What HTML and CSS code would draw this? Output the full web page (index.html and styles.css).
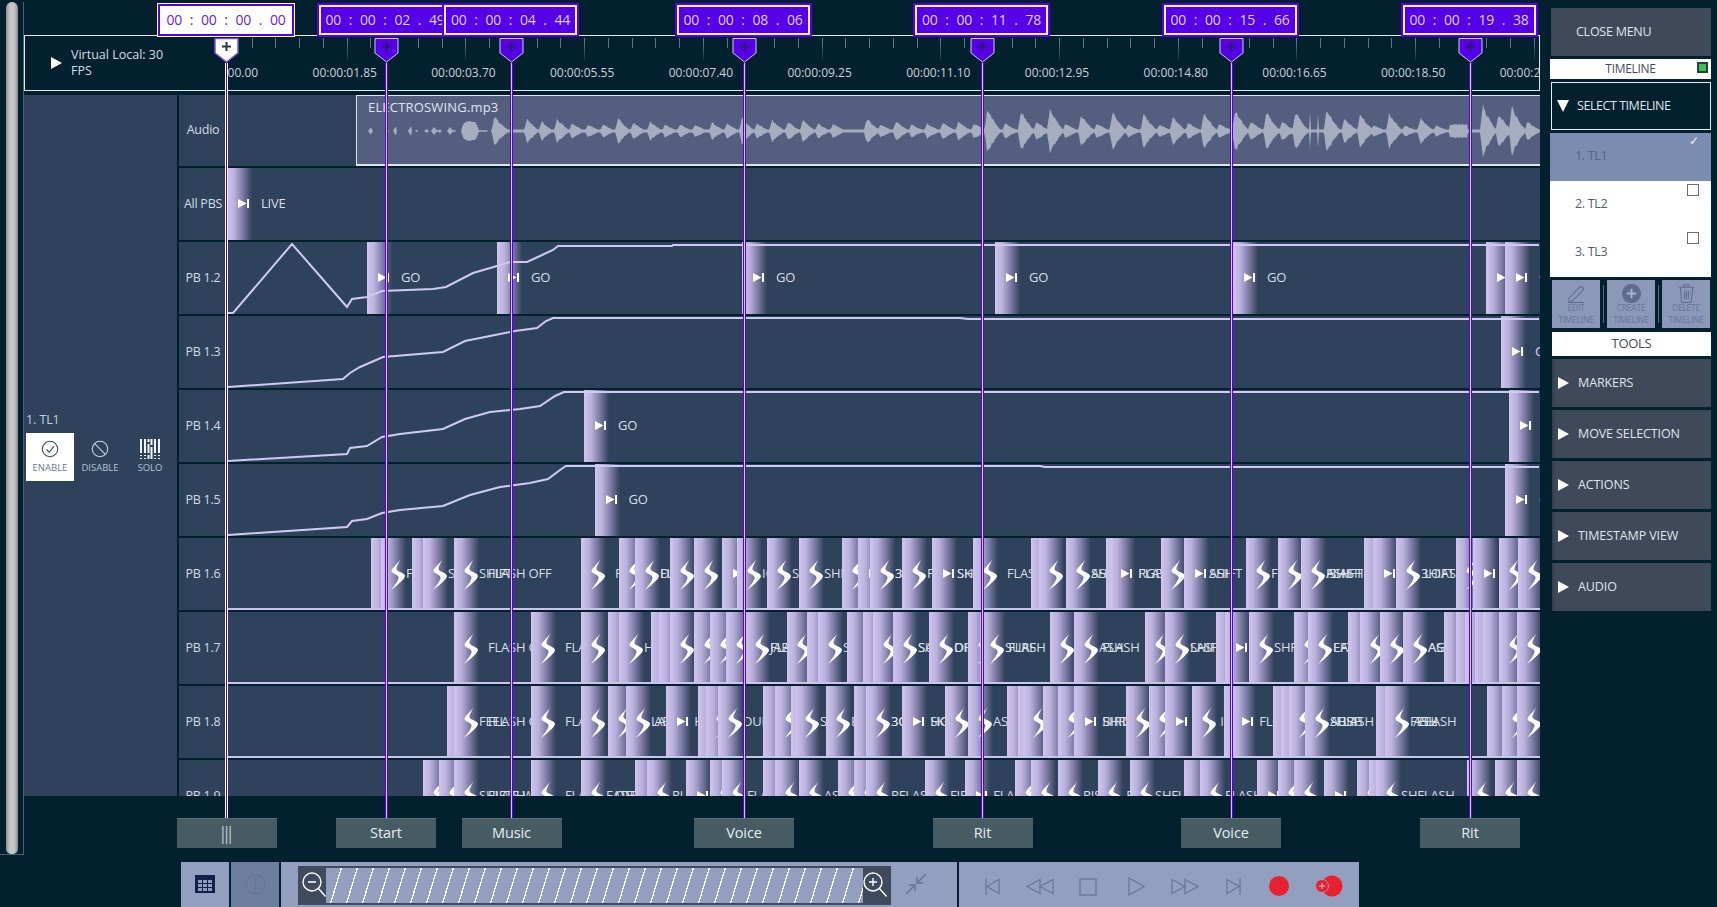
FILE: index.html
```html
<!DOCTYPE html>
<html lang="en">
<head>
<meta charset="utf-8">
<title>Timeline</title>
<link rel="stylesheet" href="styles.css">
</head>
<body>
<div class="app" id="app">
  <div class="rail"><div class="thumb"></div></div>
  <main class="main">
    <div class="timebar"></div>
    <div class="ruler">
      <div class="ruler-head">
        <span class="tri tri-right"></span>
        <span class="fps">Virtual Local: 30<br>FPS</span>
      </div>
      <div class="scale" id="scale"></div>
    </div>
    <div class="body">
      <section class="panel">
        <div class="panel-title">1. TL1</div>
        <div class="modes">
          <div class="mode mode-on">
            <svg viewBox="0 0 20 20" class="mode-ic"><circle cx="10" cy="10" r="8.6"/><path d="M6 10.5l3 3 5.5-6.5"/></svg>
            <span>ENABLE</span>
          </div>
          <div class="mode">
            <svg viewBox="0 0 20 20" class="mode-ic"><circle cx="10" cy="10" r="8.6"/><path d="M4 4l12 12"/></svg>
            <span>DISABLE</span>
          </div>
          <div class="mode">
            <svg viewBox="0 0 20 20" class="mode-ic solo-ic"><path d="M1 0v14M1 16v1M1 19v1M5 0v14M5 16v1M5 19v1M8.5 0v3M8.5 5v9M8.5 16v4M11.5 0v6M11.5 8v12M15 0v14M15 16v1M15 19v1M19 0v14M19 16v1M19 19v1"/></svg>
            <span>SOLO</span>
          </div>
        </div>
      </section>
      <section class="rows" id="rows"></section>
    </div>
    <div class="body-gap"></div>
    <div class="toolbar">
      <div class="tb-btn">
        <svg viewBox="0 0 20 18" class="tb-table"><rect width="20" height="18" fill="#14204a"/><path d="M3 5h4v3H3zM8 5h4v3H8zM13 5h4v3h-4zM3 9h4v3H3zM8 9h4v3H8zM13 9h4v3h-4zM3 13h4v3H3zM8 13h4v3H8zM13 13h4v3h-4z" fill="#8f9abb"/></svg>
      </div>
      <div class="tb-btn tb-btn-dim">
        <svg viewBox="0 0 22 22" class="tb-info"><circle cx="11" cy="11" r="10"/><circle cx="11" cy="6" r="1.2"/><path d="M11 9.5v8"/></svg>
      </div>
      <div class="zoomer">
        <div class="zoom-bar">
          <svg viewBox="0 0 28 36" class="lens"><circle cx="14" cy="14" r="9"/><path d="M20.5 20.5l7 8M10 14h8"/></svg>
          <div class="hatch"></div>
          <svg viewBox="0 0 28 36" class="lens"><circle cx="10" cy="14" r="9"/><path d="M16.5 20.5l7 8M6 14h8M10 10v8"/></svg>
        </div>
        <svg viewBox="0 0 20 20" class="collapse"><path d="M0 20l8-8M3 11h6v6M20 0l-8 8M17 9h-6V3"/></svg>
      </div>
      <div class="transport">
        <svg viewBox="0 0 16 18" class="tp tp-a"><path d="M1 0v18M15 1.500v15L2 9z"/></svg>
        <svg viewBox="0 0 30 18" class="tp tp-b"><path d="M15 1.500v15L1 9zM29 1.500v15L15 9z"/></svg>
        <svg viewBox="0 0 18 18" class="tp tp-c"><rect x="1" y="1" width="16" height="16"/></svg>
        <svg viewBox="0 0 18 20" class="tp tp-d"><path d="M1 1v18l16-9z"/></svg>
        <svg viewBox="0 0 30 18" class="tp tp-e"><path d="M1 1.500v15L15 9zM15 1.500v15L29 9z"/></svg>
        <svg viewBox="0 0 16 18" class="tp tp-f"><path d="M15 0v18M1 1.500v15L14 9z"/></svg>
        <span class="rec"></span>
        <svg viewBox="0 0 28 22" class="rec-add"><circle cx="17" cy="11" r="10.500" fill="#e8202f"/><circle cx="7" cy="11" r="6.500" fill="#e8202f" stroke="#939fbe"/><path d="M4 11h6M7 8v6" stroke="#d9c6d2" fill="none"/></svg>
      </div>
    </div>
  </main>
  <aside class="menu">
    <div class="m-item m-close">CLOSE MENU</div>
    <div class="m-head">TIMELINE<span class="led"></span></div>
    <div class="m-item m-select"><span class="tri tri-down"></span>SELECT TIMELINE</div>
    <ul class="tl-list">
      <li class="tl tl-on"><span class="tick">&#10003;</span>1. TL1</li>
      <li class="tl"><span class="box"></span>2. TL2</li>
      <li class="tl"><span class="box"></span>3. TL3</li>
    </ul>
    <div class="tl-actions">
      <div class="act">
        <svg viewBox="0 0 20 20"><path d="M2 15L13 3.500q2-1.500 3.500 0t0 3.500L5.500 18H2zM1 19.500h17"/></svg>
        <span>EDIT<br>TIMELINE</span>
      </div>
      <div class="act">
        <svg viewBox="0 0 20 20"><circle cx="10" cy="10" r="9.500" class="act-fill"/><path d="M10 5v10M5 10h10" class="act-plus"/></svg>
        <span>CREATE<br>TIMELINE</span>
      </div>
      <div class="act">
        <svg viewBox="0 0 20 20"><path d="M2 3.500h16M7 3.500V1h6v2.500M3.500 3.500L5 19.500h10l1.500-16M8 7v9M10 7v9M12 7v9"/></svg>
        <span>DELETE<br>TIMELINE</span>
      </div>
    </div>
    <div class="m-tools">TOOLS</div>
    <div class="m-item m-acc"><span class="tri tri-right"></span>MARKERS</div>
    <div class="m-item m-acc"><span class="tri tri-right"></span>MOVE SELECTION</div>
    <div class="m-item m-acc"><span class="tri tri-right"></span>ACTIONS</div>
    <div class="m-item m-acc"><span class="tri tri-right"></span>TIMESTAMP VIEW</div>
    <div class="m-item m-acc"><span class="tri tri-right"></span>AUDIO</div>
  </aside>
</div>
<script src="app.js"></script>
</body>
</html>
```
FILE: styles.css
```css
* { box-sizing: border-box; }
html, body { margin: 0; padding: 0; }
body {
  background: #03202f;
  font-family: "Open Sans", "Noto Sans", sans-serif;
  color: #d8dfe8;
  overflow: hidden;
}
.app {
  position: relative;
  display: flex;
  width: 1717px;
  height: 907px;
  overflow: hidden;
  background: #03202f;
}

/* left rail */
.rail {
  width: 24px;
  height: 853px;
  margin-top: 2px;
  padding-left: 6px;
  flex: none;
  border-right: 1px solid #4b6272;
  border-bottom: 1px solid #4b6272;
}
.thumb {
  width: 12px;
  height: 100%;
  border-radius: 6px 6px 5px 5px;
  background: linear-gradient(90deg, #8f8f8f, #c9c9c9 35%, #c4c4c4 70%, #8a8a8a);
}

/* main column */
.main {
  width: 1516px;
  flex: none;
  display: flex;
  flex-direction: column;
}
.timebar { height: 35px; flex: none; }
.ruler {
  height: 56px;
  flex: none;
  display: flex;
  border: 1px solid #dfe9ee;
}
.ruler-head {
  width: 202px;
  flex: none;
  display: flex;
  align-items: center;
  gap: 9px;
  padding-left: 26px;
}
.fps { font-size: 12.5px; line-height: 16px; letter-spacing: 0; color: #d5dde4; }
.scale { position: relative; flex: 1; overflow: hidden; }
.tick-mark { position: absolute; top: 2px; width: 1px; height: 10px; background: #5f7784; }
.tick-major { height: 22px; background: linear-gradient(#6f8590, rgba(111,133,144,.15)); }
.time-label {
  position: absolute;
  top: 28px;
  transform: translateX(-50%);
  font-size: 12px;
  line-height: 18px;
  letter-spacing: 0;
  color: #c6d2da;
  white-space: nowrap;
}

/* body */
.body {
  height: 701px;
  margin-top: 4px;
  flex: none;
  display: flex;
  overflow: hidden;
  background: #2f425c;
}
.panel { width: 153px; flex: none; padding: 316px 0 0 2px; }
.panel-title { font-size: 12.500px; line-height: 18px; letter-spacing: -0.1px; color: #c3cfdc; margin-bottom: 4px; }
.modes { display: flex; gap: 2px; }
.mode {
  width: 48px;
  height: 48px;
  flex: none;
  display: flex;
  flex-direction: column;
  align-items: center;
  padding-top: 7px;
  font-size: 9.500px;
  line-height: 14px;
  letter-spacing: 0;
  color: #b5c1d2;
}
.mode-on { background: #fff; color: #6a7a96; }
.mode-ic { width: 18px; height: 18px; margin-bottom: 3px; fill: none; stroke: #c8d3e0; stroke-width: 1.200; }
.mode-on .mode-ic { stroke: #3c4c68; }
.solo-ic { width: 20px; height: 20px; margin-top: -1px; margin-bottom: 2px; stroke: #f1f4f8; stroke-width: 2; }

.rows { flex: 1; display: flex; flex-direction: column; border-left: 2px solid #03202f; }
.row { height: 74px; flex: none; display: flex; border-bottom: 2px solid #03202f; }
.row-audio { height: 73px; }
.row-label {
  width: 48px;
  flex: none;
  display: flex;
  align-items: center;
  justify-content: center;
  padding-bottom: 2px;
  font-size: 12.500px;
  letter-spacing: -0.25px;
  color: #d2dbe6;
  white-space: nowrap;
}
.track { position: relative; flex: 1; overflow: hidden; }
.floor::after {
  content: "";
  position: absolute;
  left: 0;
  right: 0;
  bottom: 0;
  height: 2px;
  background: #cdc4ee;
  z-index: 3;
}
.audio-clip {
  position: absolute;
  left: 129px;
  top: 0;
  right: -4px;
  bottom: 0;
  background: #545f80;
  border: 1px solid #dfe5ee;
  border-width: 1px 0 2px 1px;
}
.audio-name {
  position: absolute;
  left: 11px;
  top: 1px;
  font-size: 13px;
  line-height: 20px;
  letter-spacing: 0.18px;
  color: #dfe5ee;
}
.wave { position: absolute; left: 0; top: 0; width: 1190px; height: 70px; fill: #a5adbe; }
.clip {
  position: absolute;
  top: 0;
  bottom: 0;
  overflow: hidden;
  background: #2f425c linear-gradient(90deg, #cfc5ee, #b9b0dc 30%, #72739a 68%, #2f425c) no-repeat 0 0 / 25px 100%;
}
.clip-label {
  position: absolute;
  top: 25px;
  font-size: 13px;
  line-height: 20px;
  letter-spacing: -0.2px;
  color: #d9dfe9;
  white-space: pre;
}
.lab-far { left: 34px; }
.lab-near { left: 25px; }
.ic-s { position: absolute; left: 10px; top: 21px; width: 14px; height: 31px; fill: #fff; }
.ic-p { position: absolute; left: 11px; top: 31px; width: 11px; height: 9px; fill: #fff; }
.env { position: absolute; left: 0; top: 0; width: 1312px; height: 72px; fill: none; stroke: #d0c9f2; stroke-width: 2; z-index: 2; overflow: visible; }

.body-gap { height: 66px; flex: none; }

/* markers */
.marker {
  position: absolute;
  top: 3px;
  height: 845px;
  width: 140px;
  transform: translateX(-50%);
  display: flex;
  flex-direction: column;
  align-items: center;
  z-index: 5;
}
.stamp {
  width: 137px;
  height: 34px;
  margin-right: 2px;
  flex: none;
  display: flex;
  align-items: center;
  justify-content: center;
  padding-bottom: 2px;
  border: 2px solid #5600e8;
  background: #5600e8;
  box-shadow: inset 0 0 0 2px #f4f0ff;
  color: #ddd2ff;
  font-size: 14px;
  letter-spacing: -0.25px;
  word-spacing: 4.400px;
  white-space: pre;
  overflow: hidden;
}
.stamp-on {
  width: 136px;
  height: 32px;
  margin: 1px 1px 1px 0;
  background: #fff;
  color: #6a22e0;
  box-shadow: 0 0 0 1px #fff;
}
.shield { width: 25px; height: 25px; margin-top: 1px; flex: none; }
.shield path:first-child { fill: #5600e8; stroke: #cfc8f2; stroke-width: 1; }
.shield path:last-child { fill: none; stroke: #2a1a6a; stroke-width: 2; }
.marker-on .shield path:first-child { fill: #fff; stroke: #7a4fe6; stroke-width: 1.500; }
.marker-on .shield path:last-child { stroke: #2c3850; }
.line {
  width: 3px;
  flex: 1;
  background: linear-gradient(90deg, #5600e8 33%, #d9d2f8 33%, #d9d2f8 66%, #5600e8 66%);
}
.marker-on .line { background: linear-gradient(90deg, #fff 33%, #5600e8 33%, #5600e8 66%, #fff 66%); }
.tag {
  width: 100px;
  height: 30px;
  flex: none;
  display: flex;
  align-items: center;
  justify-content: center;
  padding-bottom: 3px;
  background: #475b63;
  border-top: 1px solid #5b7076;
  font-size: 14.500px;
  letter-spacing: -0.1px;
  color: #e6edf0;
}
.marker-on .tag {
  padding: 0 6px 2px 0;
  font-size: 18px;
  font-weight: 300;
  letter-spacing: -6px;
}

/* toolbar */
.toolbar { height: 45px; flex: none; display: flex; margin-left: 157px; }
.tb-btn {
  width: 48px;
  margin-right: 2px;
  flex: none;
  display: flex;
  align-items: center;
  justify-content: center;
  background: #939fbe;
}
.tb-btn-dim { background: #6c7f9f; }
.tb-table { width: 20px; height: 18px; margin-top: -1px; }
.tb-info { width: 21px; height: 21px; fill: none; stroke: #5f7495; stroke-width: 1; }
.zoomer {
  width: 676px;
  flex: none;
  display: flex;
  padding: 4px 0 0 17px;
  background: #939fbe;
}
.zoom-bar {
  width: 593px;
  height: 39px;
  flex: none;
  display: flex;
  padding: 2px 0;
  background: #3f4a5c;
}
.lens { width: 28px; height: 36px; flex: none; fill: none; stroke: #fff; stroke-width: 1.400; }
.hatch {
  flex: 1;
  background: #939fbe repeating-linear-gradient(107deg, #939fbe 0, #939fbe 14px, #fff 14px, #fff 15.300px);
}
.collapse { width: 20px; height: 20px; margin: 8px 0 0 15px; fill: none; stroke: #66779a; stroke-width: 1.500; }
.transport {
  position: relative;
  width: 400px;
  margin-left: 2px;
  flex: none;
  display: flex;
  align-items: flex-start;
  background: #939fbe;
}
.tp { flex: none; fill: none; stroke: #66779a; stroke-width: 1.300; margin-top: 16px; }
.tp-a { width: 15px; height: 17px; margin-left: 26px; }
.tp-b { width: 28px; height: 17px; margin-left: 26px; }
.tp-c { width: 18px; height: 18px; margin-left: 25px; }
.tp-d { width: 17px; height: 19px; margin-left: 31px; margin-top: 15px; }
.tp-e { width: 28px; height: 17px; margin-left: 26px; }
.tp-f { width: 15px; height: 17px; margin-left: 27px; }
.rec { width: 20px; height: 20px; margin: 14px 0 0 28px; flex: none; border-radius: 50%; background: #e8202f; }
.rec-add { width: 28px; height: 22px; margin: 13px 0 0 26px; flex: none; }

/* right menu */
.menu {
  width: 161px;
  margin-left: 10px;
  padding-top: 8px;
  flex: none;
  display: flex;
  flex-direction: column;
  gap: 3px;
}
.m-item {
  height: 48px;
  flex: none;
  display: flex;
  align-items: center;
  padding: 0 0 2px 26px;
  font-size: 12.500px;
  letter-spacing: -0.25px;
  color: #dfe6ec;
  background: #3f4959;
}
.m-close { margin-left: 1px; padding-left: 25px; }
.m-head {
  position: relative;
  height: 20px;
  flex: none;
  display: flex;
  align-items: center;
  justify-content: center;
  padding-bottom: 2px;
  font-size: 12px;
  letter-spacing: -0.3px;
  color: #3f4c5c;
  background: #fff;
}
.led {
  position: absolute;
  right: 3px;
  top: 3px;
  width: 11px;
  height: 11px;
  background: #3ec24a;
  border: 2px solid #25404a;
}
.m-select {
  margin-left: 1px;
  padding-left: 25px;
  letter-spacing: -0.45px;
  background: #03202f;
  border: 1px solid #e6edf2;
  position: relative;
}
.m-select .tri { position: absolute; left: 5px; top: 17px; }
.m-acc { position: relative; margin-left: 2px; letter-spacing: -0.1px; background: #3f4959; box-shadow: inset 3px 0 3px -2px #2a3a48; padding-left: 26px; }
.m-acc .tri { position: absolute; left: 6px; top: 18px; }
.tri { display: block; flex: none; width: 0; height: 0; border-style: solid; border-color: transparent; }
.tri-right { border-width: 6px 0 6px 11px; border-left-color: #fff; }
.tri-down { border-width: 12px 6px 0 6px; border-top-color: #fff; }
.tl-list { margin: 0; padding: 0; list-style: none; flex: none; }
.tl {
  position: relative;
  height: 48px;
  padding: 14px 0 0 25px;
  font-size: 12.500px;
  line-height: 18px;
  letter-spacing: -0.3px;
  color: #55606e;
  background: #fff;
}
.tl-on { background: #7a8cb0; color: #536388; }
.box { position: absolute; right: 12px; top: 3px; width: 12px; height: 12px; border: 1px solid #666f7a; }
.tick { position: absolute; right: 12px; top: 0; font-size: 12px; line-height: 16px; color: #eef2f8; }
.tl-actions { height: 48px; margin: 0 1px 1px 2px; flex: none; display: flex; gap: 7px; }
.act {
  position: relative;
  width: 48px;
  flex: none;
  display: flex;
  flex-direction: column;
  align-items: center;
  padding-top: 4px;
  font-size: 8.500px;
  line-height: 12px;
  letter-spacing: -0.25px;
  text-align: center;
  color: #667799;
  background: #8b98b8;
}
.act + .act::before {
  content: "";
  position: absolute;
  left: -4px;
  top: 5px;
  bottom: 5px;
  width: 1px;
  background: #5a6b80;
}
.act svg { width: 19px; height: 19px; fill: none; stroke: #5d6d90; stroke-width: 1.100; }
.act span { margin-top: -1px; }
.act svg .act-fill { fill: #5d6d90; }
.act svg .act-plus { stroke: #a9b4cc; stroke-width: 2; }
.m-tools {
  height: 24px;
  margin-left: 2px;
  flex: none;
  display: flex;
  align-items: center;
  justify-content: center;
  padding-bottom: 2px;
  font-size: 13px;
  letter-spacing: -0.3px;
  color: #3f4c5c;
  background: #fff;
}
```
FILE: app.js
```js
(function () {
  var SVG = 'http://www.w3.org/2000/svg';
  var ORIGIN = 227;
  var S_PATH = 'M9.500 0C7.500 4 .5 9 .5 12 .5 14.500 6.500 15 7.500 18 8 21 3 27 0 31 5 27.500 14 20 14 17 14 14 6.500 13 5.500 10.500 5 8 8 3.500 9.500 0Z';
  var P_PATH = 'M0 0L8.500 4.500 0 9ZM9 0H11V9H9Z';

  var markers = [
    [226.5, '00 : 00 : 00 . 00', '|||', true],
    [386, '00 : 00 : 02 . 49', 'Start'],
    [511.5, '00 : 00 : 04 . 44', 'Music'],
    [744, '00 : 00 : 08 . 06', 'Voice'],
    [982.5, '00 : 00 : 11 . 78', 'Rit'],
    [1231, '00 : 00 : 15 . 66', 'Voice'],
    [1470, '00 : 00 : 19 . 38', 'Rit']
  ];

  /* token: x + icon (s, p, x) + labels; "^" puts a label at the near offset */
  var rows = [
    { name: 'All PBS', clips: ['227p|LIVE'] },
    { name: 'PB 1.2', clips: ['367p|GO', '497p|GO', '742p|GO', '995p|GO', '1233p|GO', '1486p', '1505p|OFF'],
      env: '228,313 233,313 292,244 347,307 352,299 367,297 377,293 382,291 433,289 446,287 473,273 497,266 510,262 527,262 540,256 553,250 558,246 672,246 673,245 1539,245' },
    { name: 'PB 1.3', clips: ['1501p|GO'],
      env: '228,387 343,379 350,373 360,367 383,357 443,352 465,341 490,336 515,331 537,328 546,321 553,318 960,318 968,319 1539,319' },
    { name: 'PB 1.4', clips: ['584p|GO', '1509p|GO'],
      env: '228,461 347,454 350,448 367,446 382,437 400,434 443,429 465,419 490,412 520,409 540,406 555,396 564,392 1539,392' },
    { name: 'PB 1.5', clips: ['594.5p|GO', '1505p|GO'],
      env: '228,535 347,527 352,521 367,519 382,513 400,510 443,506 470,495 500,487 530,483 548,479 560,470 566,466 1040,466 1045,467 1539,467' },
    { name: 'PB 1.6', floor: true, clips: [
      '371x', '381s|^FLASH', '412x', '423s|^SHIFT', '454s|^SHIFT|FLASH OFF', '581s|FLASH', '619s', '635s|^DARK|^FLASH',
      '670s|FLASH', '694s|FLASH', '722p|FLASH', '737s|^IGN', '767s|^SHIFT', '799s|^SHIFT', '842s', '858p', '870s|^3HIFT|^3 OFF',
      '902s|^FLASH', '932p|^SHIFT|^SKIP', '973s|FLASH', '1031x', '1039s', '1066s|^ASH|^SHIFT', '1106x', '1110p|^ FLASH|^ RGB',
      '1161s', '1184p|^ASH|^SHIFT', '1246s|^FLASH', '1278s', '1301s|^ASH|^FLASH|^ SHIFT', '1364x', '1373p',
      '1396s|^3HIFT|^ LOAS', '1456s', '1473p|^ L', '1499s', '1518s'] },
    { name: 'PB 1.7', floor: true, clips: [
      '454s|FLASH ON', '531s|FLASH', '581s', '608x', '619s|^HI', '651x', '659x', '670s', '694s', '710s', '726s',
      '745s|^FLASH|^JAB', '787s', '807x', '818s|^S', '847x', '863s', '873s', '893s|^SAT|^SUN', '929s|^DIFF|^OFF', '968s',
      '980s|^SURF|^ FLASH', '1050s', '1074s|^ASH|^ FLASH', '1145s', '1165s|^LASH|^SHIFT', '1216x', '1225p|^ X', '1249s|^SHFL',
      '1294s', '1308s|^EAR|^EFX', '1348x', '1360s', '1380s', '1403s|^AG|^AS', '1444x', '1456x', '1465s', '1475x', '1483x',
      '1499s|^3H|^SH', '1517s'] },
    { name: 'PB 1.8', floor: true, clips: [
      '447x', '454s|^FEEL|FLASH ON', '531s|FLASH', '581s', '608s', '626s|^LAB|^ AB', '666p|^ HF', '698x', '706s', '718s|^DURES',
      '763x', '775s', '791x', '795s|^SA', '826s|^B', '854x', '866s|^3O|^3C', '902p|^ HG|^ SK', '945s', '968s|^ASH',
      '1007x', '1018x', '1023s', '1043x', '1058s', '1074p|^ BIRD|^ SHRED', '1126s', '1149s', '1165p|^ L', '1192s|^ I', '1224x',
      '1231p|^ FLG', '1273x', '1281x', '1289s', '1305s|^SURF|^ABSH|^  FLASH', '1376x', '1385s|^FEEL|^ ASH|FLASH', '1487x', '1502s', '1517s|^D'] },
    { name: 'PB 1.9', clips: [
      '423s', '439s', '454s|^SHIFTS W|FLASH', '531s|FLASH', '581s|OFF|^FADE', '635x', '647s|^RUN', '686p', '710s', '722s|^FLAN',
      '763x', '775s', '799s|^ASH', '838s', '854s', '866s|^RFLAS', '925s|^FIFE', '965p|^ FLASH', '1015s', '1031s', '1058s|^RISE',
      '1098s|^ FIRE', '1130s|^SHFLA', '1184x', '1200s|^FLASH', '1257p|^ SI', '1278s', '1294s', '1324p', '1357s', '1369s', '1376s|^SHFLASH',
      '1467s', '1495s', '1517s'] }
  ];

  function el(tag, cls, text) {
    var node = document.createElement(tag);
    if (cls) node.className = cls;
    if (text !== undefined) node.textContent = text;
    return node;
  }
  function svg(cls, viewBox, d) {
    var node = document.createElementNS(SVG, 'svg');
    node.setAttribute('class', cls);
    node.setAttribute('viewBox', viewBox);
    if (d) {
      var p = document.createElementNS(SVG, 'path');
      p.setAttribute('d', d);
      node.appendChild(p);
    }
    return node;
  }

  /* ruler */
  var scale = document.getElementById('scale');
  var STEP = 118.72 / 5;
  for (var i = 0; i * STEP < 1320; i++) {
    var t = el('span', 'tick-mark' + (i % 5 === 0 ? ' tick-major' : ''));
    t.style.left = (i * STEP + 1) + 'px';
    scale.appendChild(t);
  }
  ['00.00', '01.85', '03.70', '05.55', '07.40', '09.25', '11.10', '12.95', '14.80', '16.65', '18.50', '20.35'].forEach(function (s, n) {
    var lab = el('span', 'time-label', '00:00:' + s);
    lab.style.left = (n * 118.72 - 1) + 'px';
    scale.appendChild(lab);
  });

  /* waveform: each pulse has [x, half height, decay length] */
  function buildWave() {
    var pulses = [
      [371, 4, 2], [388, 1, 1], [396, 5, 1], [411, 5, 1], [417, 1, 1], [427, 2, 2], [434, 4, 4], [440, 2, 2], [450, 4, 4], [455, 1, 1],
      [494.5, 15, 16], [527, 13, 13], [541.500, 10, 13], [557, 13, 14], [572, 8, 14], [588, 7, 14], [603, 7, 14], [618, 13, 14], [633, 9, 14],
      [650, 10, 14], [665, 7, 14], [680, 7, 14], [695, 7, 14], [712, 9, 14], [727, 8, 14], [742, 14, 14], [757, 8, 14], [772, 12, 14], [788, 10, 14],
      [803, 12, 14], [818, 8, 14], [833, 8, 14]
    ];
    [[60, 13], [90, 7], [125, 10], [160, 7], [195, 8], [230, 9], [265, 10], [300, 8], [330, 23], [370, 8], [405, 21], [440, 10], [470, 23],
     [505, 8], [540, 17], [575, 8], [610, 20], [645, 7], [680, 18], [715, 7], [745, 15], [780, 9], [815, 19], [850, 8], [885, 22], [920, 10],
     [955, 20], [990, 10], [1020, 20], [1090, 23], [1130, 13], [1165, 18], [1195, 6], [1230, 18], [1265, 6], [1300, 14], [1335, 6], [1440, 26],
     [1475, 18], [1505, 26], [1540, 10]].forEach(function (p) {
      pulses.push([840 + p[0] / 2.24, p[1], 15]);
    });
    function amp(x) {
      var v = x >= 494 ? 1.5 : 0;
      if (x > 460 && x < 480) v = Math.max(v, 11 * Math.sqrt(Math.max(0, 1 - Math.pow((x - 470) / 8.5, 2))));
      if (x >= 478 && x <= 487) v = Math.max(v, 0.8);
      if (x >= 1450 && x < 1468) v = Math.max(v, 7);
      if (Math.abs(x - 1310) < 1) v = Math.max(v, 22);
      if (Math.abs(x - 1318) < 1) v = Math.max(v, 17);
      pulses.forEach(function (p) {
        var d = x - p[0];
        if (d >= -3 && d < 0) v = Math.max(v, p[1] * (1 + d / 3));
        else if (d >= 0 && d < p[2]) v = Math.max(v, p[1] * Math.pow(1 - d / p[2], 1.3));
      });
      return v;
    }
    var up = [], down = [];
    for (var x = 360; x <= 1545; x++) {
      var a = amp(x);
      var hash = Math.abs(Math.sin(x * 12.9898) * 43758.5453) % 1;
      var h = a > 3 ? a * (0.82 + 0.22 * hash) : a;
      if (h < 0.4) h = 0;
      up.push((x - 357) + ' ' + (35 - h).toFixed(1));
      down.unshift((x - 357) + ' ' + (35 + h).toFixed(1));
    }
    return 'M' + up.join('L') + 'L' + down.join('L') + 'Z';
  }

  /* tracks */
  var host = document.getElementById('rows');
  function makeRow(name, cls) {
    var row = el('div', 'row' + (cls ? ' ' + cls : ''));
    row.appendChild(el('div', 'row-label', name));
    var track = el('div', 'track');
    row.appendChild(track);
    host.appendChild(row);
    return track;
  }
  var audio = makeRow('Audio', 'row-audio');
  var audioClip = el('div', 'audio-clip');
  audioClip.appendChild(svg('wave', '0 0 1190 70', buildWave()));
  audioClip.appendChild(el('div', 'audio-name', 'ELECTROSWING.mp3'));
  audio.appendChild(audioClip);

  rows.forEach(function (r, idx) {
    var track = makeRow(r.name);
    if (r.floor) track.classList.add('floor');
    var parsed = r.clips.map(function (tok) {
      var parts = tok.split('|');
      var head = parts.shift();
      return { x: parseFloat(head), icon: head.slice(-1), labels: parts };
    });
    parsed.forEach(function (c, n) {
      var next = n + 1 < parsed.length ? parsed[n + 1].x : 1545;
      var clip = el('div', 'clip');
      clip.style.left = (c.x - ORIGIN) + 'px';
      clip.style.width = (next - c.x) + 'px';
      if (c.icon === 's') clip.appendChild(svg('ic-s', '0 0 14 31', S_PATH));
      if (c.icon === 'p') clip.appendChild(svg('ic-p', '0 0 11 9', P_PATH));
      c.labels.forEach(function (l) {
        var near = l.charAt(0) === '^';
        clip.appendChild(el('span', 'clip-label ' + (near ? 'lab-near' : 'lab-far'), near ? l.slice(1) : l));
      });
      track.appendChild(clip);
    });
    if (r.env) {
      var top = 168 + 74 * idx;
      var shifted = r.env.split(' ').map(function (pt) {
        var xy = pt.split(',');
        return (xy[0] - ORIGIN) + ' ' + (xy[1] - top);
      });
      track.appendChild(svg('env', '0 0 1312 72', 'M' + shifted.join('L')));
    }
  });

  /* markers */
  var app = document.getElementById('app');
  markers.forEach(function (m) {
    var node = el('div', 'marker' + (m[3] ? ' marker-on' : ''));
    node.style.left = m[0] + 'px';
    node.appendChild(el('div', 'stamp' + (m[3] ? ' stamp-on' : ''), m[1]));
    var shield = svg('shield', '0 0 25 25', 'M1 .5H24V15L12.500 24 1 15Z');
    var plus = document.createElementNS(SVG, 'path');
    plus.setAttribute('d', 'M12.500 4V13M8 8.500H17');
    shield.appendChild(plus);
    node.appendChild(shield);
    node.appendChild(el('div', 'line'));
    node.appendChild(el('div', 'tag', m[2]));
    app.appendChild(node);
  });
})();
```
